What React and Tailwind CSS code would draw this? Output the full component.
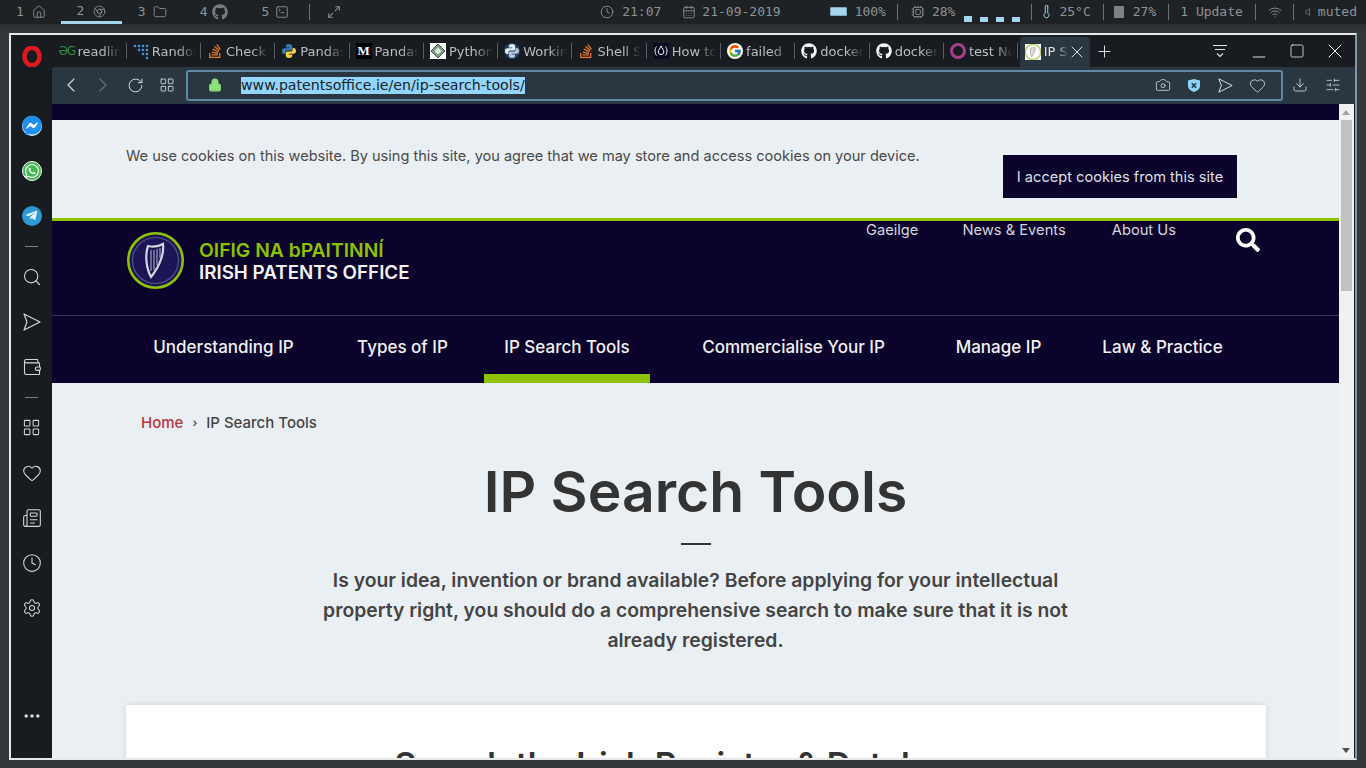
import React from 'react'
import {
  Home, Chrome, Folder, SquareTerminal, Maximize2, Clock, CalendarDays, Cpu, Thermometer, Wifi, Volume,
  ChevronLeft, ChevronRight, RotateCw, LayoutGrid, Lock, Camera, Heart, Download,
  SlidersHorizontal, Plus, X, Minus, Square, Search, Wallet, Newspaper, Settings, Ellipsis,
} from 'lucide-react'
import { FaGithub, FaStackOverflow, FaWhatsapp, FaFacebookMessenger, FaTelegramPlane, FaSearch } from 'react-icons/fa'
import { FcGoogle } from 'react-icons/fc'

const mono = "font-['DejaVu_Sans_Mono',monospace]"
const page = "font-['Inter','Open_Sans',sans-serif]"

function PythonIcon({ dark }) {
  return (
    <svg width="16" height="16" viewBox="0 0 16 16" className={dark ? 'rounded-full bg-[#1d3f63]' : ''}>
      <path d="M8 1C5.5 1 4.8 2 4.8 3.2V4.6H8.2V5.2H3.2C2 5.2 1 6.2 1 8s1 3 2.2 3H4.4V9.4C4.4 8 5.4 7.4 6.4 7.4H9.6C10.6 7.4 11.2 6.8 11.2 5.8V3.2C11.2 2 10.2 1 8 1Z" fill={dark ? '#e6ecf2' : '#3b7cb5'} />
      <path d="M8 15c2.500 0 3.200-1 3.200-2.200V11.400H7.800V10.800H12.800C14 10.800 15 9.800 15 8s-1-3-2.200-3H11.600V6.600C11.600 8 10.600 8.600 9.600 8.600H6.400C5.400 8.600 4.800 9.200 4.800 10.200V12.800C4.800 14 5.800 15 8 15Z" fill={dark ? '#b7c6d6' : '#f7cf45'} />
    </svg>
  )
}

function HarpIcon({ size = 16, light }) {
  return (
    <svg width={size} height={size} viewBox="0 0 57 57">
      <circle cx="28.500" cy="28.500" r="27.200" fill={light ? '#fff' : '#1c1556'} stroke={light ? '#b8cf6a' : '#8dc200'} strokeWidth={light ? 5 : 2.6} />
      <circle cx="28.500" cy="28.500" r="23" fill="none" stroke={light ? '#ddd' : '#55508a'} strokeWidth="1.200" />
      <path d="M21 14C18 22 19 36 24 45L27 41C33 32 37 21 36 12C31 15 26 15 21 14Z" fill="none" stroke={light ? '#777' : '#d5d5e0'} strokeWidth="2.200" />
      <path d="M24 18V39M27 18V38M30 17V33M33 16V26" stroke={light ? '#888' : '#bdbdd0'} strokeWidth="1" />
    </svg>
  )
}

// paper plane outline, used in the sidebar and the address bar
function PlaneIcon({ size = 18 }) {
  return (
    <svg width={size} height={size} viewBox="0 0 18 18" fill="none" stroke="currentColor" strokeWidth="1.200" strokeLinejoin="round">
      <path d="M1 1L17 9L1 17L4 9Z" />
    </svg>
  )
}

const tabs = [
  { title: 'readline', icon: <span className="w-4 text-[12px] leading-4 tracking-[-1px] text-[#2f8d46]">ƏG</span> },
  {
    title: 'Random',
    icon: (
      <svg width="16" height="16" viewBox="0 0 16 16" fill="#3f9bdc">
        <circle cx="2" cy="3" r="1.300" /><circle cx="6" cy="3" r="1.300" /><circle cx="10" cy="3" r="1.300" />
        <circle cx="14" cy="3" r="1.300" /><circle cx="6" cy="7" r="1.300" /><circle cx="10" cy="7" r="1.300" />
        <circle cx="14" cy="7" r="1.300" /><circle cx="10" cy="11" r="1.300" /><circle cx="14" cy="11" r="1.300" />
        <circle cx="14" cy="15" r="1.300" />
      </svg>
    ),
  },
  { title: 'Check', icon: <FaStackOverflow size={16} color="#e8792b" /> },
  { title: 'Pandas', icon: <PythonIcon /> },
  {
    title: 'Pandas',
    icon: <span className="w-4 h-4 bg-black text-white text-[13px] leading-4 font-bold text-center font-['Liberation_Serif',serif]">M</span>,
  },
  {
    title: 'Python',
    icon: (
      <svg width="16" height="16" viewBox="0 0 16 16">
        <rect width="16" height="16" fill="#fff" />
        <path d="M8 1L15 8L8 15L1 8Z" fill="#7f9a85" stroke="#38503f" />
        <path d="M8 4.500L11.500 8L8 11.500L4.500 8Z" fill="#dfe8df" />
      </svg>
    ),
  },
  { title: 'Working', icon: <PythonIcon dark /> },
  { title: 'Shell S', icon: <FaStackOverflow size={16} color="#e8792b" /> },
  {
    title: 'How to',
    icon: (
      <svg width="16" height="16" viewBox="0 0 16 16" fill="none">
        <rect width="16" height="16" fill="#0a0a23" />
        <path d="M3.500 3.500C1.500 6 1.500 10 3.500 12.500M12.500 3.500C14.500 6 14.500 10 12.500 12.500" stroke="#fff" />
        <path d="M8 3C9 5.500 11 6.500 10.800 9C10.700 10.500 9.500 11.500 8 11.500S5.300 10.500 5.200 9C5.100 7 7 6 8 3Z" stroke="#fff" />
      </svg>
    ),
  },
  { title: 'failed', icon: <span className="w-4 h-4 rounded-full bg-white flex items-center justify-center"><FcGoogle size={14} /></span> },
  { title: 'docker', icon: <FaGithub size={16} color="#f2f2f2" /> },
  { title: 'docker', icon: <FaGithub size={16} color="#f2f2f2" /> },
  { title: 'test No', icon: <span className="w-4 h-4 rounded-full border-[3px] border-[#a5408c]" /> },
]

function TopBar() {
  return (
    <div className={`${mono} h-6 shrink-0 bg-[#1e2225] flex items-center justify-between text-[13px] text-[#8d9396] pb-[1px]`}>
      <div className="flex items-center h-full">
        <span className="ml-4">1</span>
        <Home size={14} strokeWidth={1.500} className="ml-[8px]" />
        <div className="ml-[15px] w-[61px] h-6 border-b-[3px] border-[#a3d5ee] flex items-center justify-center gap-[9px] pt-[2px]">
          <span>2</span>
          <Chrome size={13} strokeWidth={1.500} />
        </div>
        <span className="ml-4">3</span>
        <Folder size={14} strokeWidth={1.500} className="ml-[7px]" />
        <span className="ml-[33px]">4</span>
        <FaGithub size={16} color="#777c7f" className="ml-[5px]" />
        <span className="ml-[33px]">5</span>
        <SquareTerminal size={14} strokeWidth={1.500} className="ml-[6px]" />
        <span className="ml-[20px] w-[1px] h-4 bg-[#6b7073]" />
        <Maximize2 size={14} strokeWidth={1.800} className="ml-[17px]" />
      </div>
      <div className="flex items-center h-full">
        <Clock size={14} strokeWidth={1.500} />
        <span className="ml-[8px]">21:07</span>
        <CalendarDays size={14} strokeWidth={1.500} className="ml-[21px]" />
        <span className="ml-[6px]">21-09-2019</span>
        <span className="ml-[49px] w-[17px] h-[9px] border border-[#7fa8c0] bg-[#a3d5ee] rounded-[1px]" />
        <span className="ml-[8px]">100%</span>
        <span className="ml-[11px] w-[1px] h-4 bg-[#6b7073]" />
        <Cpu size={14} strokeWidth={1.500} className="ml-[13px]" />
        <span className="ml-[7px]">28%</span>
        <div className="ml-[9px] flex items-end gap-[8px] h-[13px] pt-[1px] mt-[8px]">
          <span className="w-[8px] h-[6px] bg-[#a3d5ee]" />
          <span className="w-[8px] h-[5px] bg-[#a3d5ee]" />
          <span className="w-[8px] h-[5px] bg-[#a3d5ee]" />
          <span className="w-[8px] h-[5px] bg-[#a3d5ee]" />
        </div>
        <span className="ml-[11px] w-[1px] h-4 bg-[#6b7073]" />
        <Thermometer size={15} strokeWidth={1.500} className="ml-[7px] text-[#a3d5ee]" />
        <span className="ml-[5px]">25°C</span>
        <span className="ml-[12px] w-[1px] h-4 bg-[#6b7073]" />
        <span className="ml-[10px] w-[10px] h-[12px] bg-[#7d8285] rounded-[1px]" />
        <span className="ml-[9px]">27%</span>
        <span className="ml-[12px] w-[1px] h-4 bg-[#6b7073]" />
        <span className="ml-[11px]">1 Update</span>
        <span className="ml-[12px] w-[1px] h-4 bg-[#6b7073]" />
        <Wifi size={14} strokeWidth={1.500} className="ml-[12px]" />
        <span className="ml-[11px] w-[1px] h-4 bg-[#6b7073]" />
        <Volume size={10} strokeWidth={1.500} className="ml-[11px]" />
        <span className="ml-[3px] mr-[9px]">muted</span>
      </div>
    </div>
  )
}

function SideItem({ children }) {
  return <div className="h-[45px] flex items-center justify-center text-[#d4d7da]">{children}</div>
}

function Sidebar() {
  return (
    <div className="w-[41px] shrink-0 flex flex-col items-stretch bg-[#181b20]">
      <div className="h-[42px] flex items-center justify-center">
        <svg width="20" height="21" viewBox="0 0 20 21">
          <ellipse cx="10" cy="10.500" rx="7.500" ry="8.700" fill="none" stroke="#e0181f" strokeWidth="4.600" />
        </svg>
      </div>
      <div className="mt-[26px]">
        <SideItem>
          <span className="w-5 h-5 rounded-full bg-white flex items-center justify-center"><FaFacebookMessenger size={21} color="#1d8ff2" /></span>
        </SideItem>
        <SideItem>
          <span className="w-5 h-5 rounded-full bg-[#3fb94f] border border-white flex items-center justify-center"><FaWhatsapp size={16} color="#fff" /></span>
        </SideItem>
        <SideItem>
          <span className="w-5 h-5 rounded-full bg-[#2b9ad4] flex items-center justify-center"><FaTelegramPlane size={13} color="#e8f4fa" /></span>
        </SideItem>
      </div>
      <div className="mt-[8px] mb-[7px] mx-[14px] h-[1px] bg-[#7b7f83]" />
      <SideItem><Search size={20} strokeWidth={1.300} /></SideItem>
      <SideItem><PlaneIcon size={18} /></SideItem>
      <SideItem><Wallet size={20} strokeWidth={1.300} /></SideItem>
      <div className="mt-[8px] mb-[7px] mx-[14px] h-[1px] bg-[#7b7f83]" />
      <SideItem><LayoutGrid size={19} strokeWidth={1.300} /></SideItem>
      <SideItem><Heart size={20} strokeWidth={1.300} /></SideItem>
      <SideItem><Newspaper size={20} strokeWidth={1.300} /></SideItem>
      <SideItem><Clock size={20} strokeWidth={1.300} /></SideItem>
      <SideItem><Settings size={20} strokeWidth={1.300} /></SideItem>
      <div className="mt-auto mb-[20px]">
        <SideItem><Ellipsis size={20} strokeWidth={2.200} /></SideItem>
      </div>
    </div>
  )
}

function TabStrip() {
  return (
    <div className="h-[32px] shrink-0 flex items-stretch bg-[#181b20] text-[13px] font-['DejaVu_Sans',sans-serif] text-[#b9bdc0] pl-[0.400px]">
      {tabs.map((t, i) => (
        <div key={i} className="w-[74.300px] shrink-0 flex items-center pl-[6px] relative">
          <span className="w-4 h-4 shrink-0 flex">{t.icon}</span>
          <span className="ml-[3px] w-[44px] pt-[2px] overflow-hidden whitespace-nowrap [mask-image:linear-gradient(to_right,black_60%,transparent)]">{t.title}</span>
          <span className="absolute right-0 top-[8px] h-4 w-[1px] bg-[#595d61]" />
        </div>
      ))}
      <div className="mt-[2px] ml-[1.500px] w-[70px] bg-[#2a3640] rounded-t-[3px] flex items-center pl-[5px] text-[#e0e3e5]">
        <span className="w-4 h-4 shrink-0 bg-white flex"><HarpIcon light /></span>
        <span className="ml-[3px] w-[24px] overflow-hidden whitespace-nowrap [mask-image:linear-gradient(to_right,black_55%,transparent)]">IP Search</span>
        <X size={20} strokeWidth={1} className="-ml-[1px] text-white" />
      </div>
      <Plus size={19} strokeWidth={1.100} className="ml-[5px] self-center text-white" />
      <div className="ml-auto flex items-center text-white">
        <svg width="16" height="14" viewBox="0 0 16 14" fill="none" stroke="#e4e6e8" strokeWidth="1.100">
          <path d="M1 1.500H15M3 5.500H13M5 9.500L8 12.500L11 9.500" />
        </svg>
        <Minus size={20} strokeWidth={1} className="ml-[21px] mt-[12px]" />
        <Square size={16} strokeWidth={1.100} className="ml-[20px]" />
        <X size={24} strokeWidth={1} className="ml-[18px] mr-[8px]" />
      </div>
    </div>
  )
}

function Toolbar() {
  return (
    <div className="h-[37px] shrink-0 bg-[#2a3640] rounded-tl-[3px] flex items-center text-[#d8dcdf] pb-[1px]">
      <ChevronLeft size={24} strokeWidth={1.100} className="ml-[7px]" />
      <ChevronRight size={24} strokeWidth={1.100} className="ml-[8px] text-[#68717a]" />
      <RotateCw size={17} strokeWidth={1.400} className="ml-[12px]" />
      <LayoutGrid size={16} strokeWidth={1.300} className="ml-[15px]" />
      <div className="ml-[11px] w-[1097px] h-[31px] border-2 border-[#5d8ba6] rounded-[3px] flex items-center">
        <Lock size={14} strokeWidth={2} fill="#8ee07c" className="ml-[20px] text-[#8ee07c]" />
        <span className="ml-[19px] bg-[#94d5fd] text-[#16232b] text-[14.150px] leading-[17px] font-['DejaVu_Sans',sans-serif]">www.patentsoffice.ie/en/ip-search-tools/</span>
        <div className="ml-auto flex items-center">
          <Camera size={16} strokeWidth={1.200} />
          <svg width="14" height="15" viewBox="0 0 14 15" className="ml-[16px]">
            <path d="M7 1L13 2.500V8C13 11 10 13 7 14C4 13 1 11 1 8V2.500Z" fill="#8fd3fb" />
            <path d="M4.800 5.300L9.200 9.700M9.200 5.300L4.800 9.700" stroke="#1f3746" strokeWidth="1.500" />
          </svg>
          <span className="ml-[17px]"><PlaneIcon size={15} /></span>
          <Heart size={17} strokeWidth={1.200} className="ml-[16px] mr-[15px]" />
        </div>
      </div>
      <Download size={16} strokeWidth={1.300} className="ml-[9px]" />
      <SlidersHorizontal size={16} strokeWidth={1.200} className="ml-[17px]" />
    </div>
  )
}

const navItems = [
  { label: 'Understanding IP', w: 'w-[195px]' },
  { label: 'Types of IP', w: 'w-[163px]' },
  { label: 'IP Search Tools', w: 'w-[166px]', active: true },
  { label: 'Commercialise Your IP', w: 'w-[287px]' },
  { label: 'Manage IP', w: 'w-[123px]' },
  { label: 'Law & Practice', w: 'w-[205px]' },
]

function Site() {
  return (
    <div className={`${page} flex-1 min-w-0 overflow-hidden bg-[#eaeff3]`}>
      <div className="h-4 bg-[#0b032b]" />
      <div className="h-[98px] flex justify-between pl-[74px] pr-[102px]">
        <p className="pt-[26px] text-[14.550px] leading-5 text-[#4a4a4a]">We use cookies on this website. By using this site, you agree that we may store and access cookies on your device.</p>
        <div className="pt-[35px]">
          <button className="w-[234px] h-[43px] pt-[2px] bg-[#0b032b] text-[#dfe0e6] text-[14.600px]">I accept cookies from this site</button>
        </div>
      </div>
      <div className="h-[3px] bg-[#8dc200]" />
      <div className="bg-[#0b032b]">
        <div className="h-[95px] pl-[75px] pr-[79px] flex items-start border-b border-[#3e3858]">
          <div className="mt-[11px] flex items-center">
            <HarpIcon size={57} />
            <div className="ml-[15px] font-semibold leading-[24px] whitespace-nowrap">
              <div className="text-[#8dc200] text-[19.300px] mt-[1px]">OIFIG NA bPAITINNÍ</div>
              <div className="text-[#f4f4f7] text-[18.800px] -mt-[1px]">IRISH PATENTS OFFICE</div>
            </div>
          </div>
          <div className="ml-auto -mt-[1px] flex items-start text-[14.700px] text-[#d6d5df]">
            <span className="leading-5">Gaeilge</span>
            <span className="ml-[44px] leading-5">News &amp; Events</span>
            <span className="ml-[46px] leading-5">About Us</span>
            <FaSearch size={24} color="#fff" className="ml-[60px] mt-[8px]" />
          </div>
        </div>
        <div className="h-[67px] pl-[74px] flex text-[17px] text-[#f1f1f4] font-medium">
          {navItems.map((n) => (
            <div key={n.label} className={`${n.w} shrink-0 flex items-center justify-center pt-[14px] pb-[9px] border-b-[9px] ${n.active ? 'border-[#8dc200]' : 'border-transparent'}`}>
              {n.label}
            </div>
          ))}
        </div>
      </div>
      <div className="pl-[89px] pt-[30px] flex items-center text-[15px] leading-5 font-medium text-[#444]">
        <span className="text-[#b8363a]">Home</span>
        <span className="ml-[9px] text-[12px]">›</span>
        <span className="ml-[9px]">IP Search Tools</span>
      </div>
      <h1 className="mt-[24px] text-center text-[57px] leading-[70px] font-semibold text-[#333]">IP Search Tools</h1>
      <div className="mt-[16px] mx-auto w-[30px] h-[2px] bg-[#333]" />
      <p className="mt-[20px] mx-auto w-[790px] text-center text-[19.350px] leading-[30px] font-semibold text-[#444]">
        Is your idea, invention or brand available? Before applying for your intellectual property right, you should do a comprehensive search to make sure that it is not already registered.
      </p>
      <div className="mt-[50px] ml-[74px] mr-[73px] h-[200px] bg-white shadow-[0_0_6px_rgba(0,0,0,0.12)] pt-[34px] text-center text-[33.300px] leading-[50px] font-semibold text-[#333] whitespace-nowrap">
        Search the Irish Register &amp; Databases
      </div>
    </div>
  )
}

function Scrollbar() {
  return (
    <div className="w-[16px] shrink-0 bg-[#f1f1f1] border-r border-[#181b20] flex flex-col items-center pr-[1px]">
      <div className="h-4 flex items-center justify-center">
        <span className="border-x-[4px] border-x-transparent border-b-[5px] border-b-[#a3a3a3]" />
      </div>
      <div className="w-[11px] h-[171px] bg-[#c1c1c1]" />
      <div className="mt-auto h-4 flex items-center justify-center">
        <span className="border-x-[4px] border-x-transparent border-t-[5px] border-t-[#505050]" />
      </div>
    </div>
  )
}

export default function App() {
  return (
    <div className="w-[1366px] h-[768px] overflow-hidden bg-[#32383a] flex flex-col">
      <TopBar />
      <div className="h-[9px] shrink-0 bg-gradient-to-b from-[#2a2f31] to-[#32383a]" />
      <div className="ml-[9px] w-[1348px] h-[727px] shrink-0 border-2 border-[#e6e8ea] border-r-[#8497a6] flex bg-[#181b20]">
        <Sidebar />
        <div className="flex-1 min-w-0 flex flex-col">
          <TabStrip />
          <Toolbar />
          <div className="flex-1 min-h-0 flex">
            <Site />
            <Scrollbar />
          </div>
        </div>
      </div>
    </div>
  )
}
